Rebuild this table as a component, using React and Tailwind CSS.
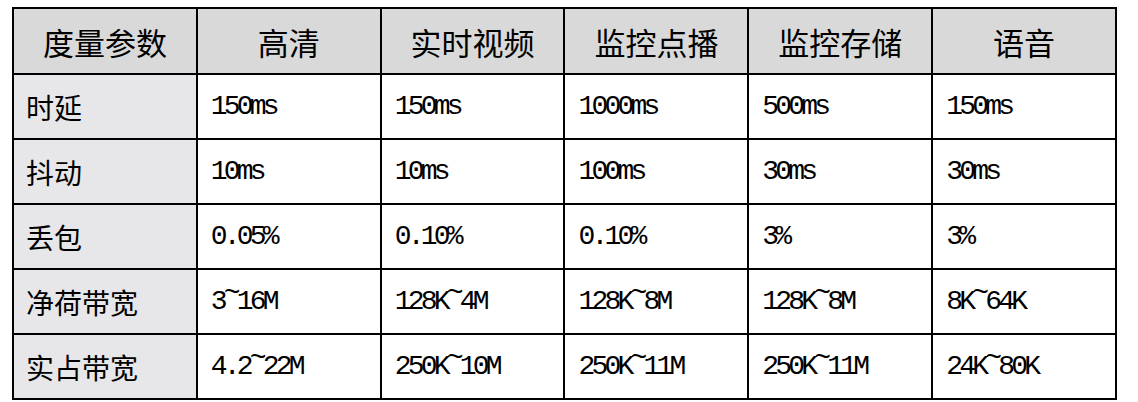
const headers = ['度量参数', '高清', '实时视频', '监控点播', '监控存储', '语音']

const rows = [
  ['时延', '150ms', '150ms', '1000ms', '500ms', '150ms'],
  ['抖动', '10ms', '10ms', '100ms', '30ms', '30ms'],
  ['丢包', '0.05%', '0.10%', '0.10%', '3%', '3%'],
  ['净荷带宽', '3~16M', '128K~4M', '128K~8M', '128K~8M', '8K~64K'],
  ['实占带宽', '4.2~22M', '250K~10M', '250K~11M', '250K~11M', '24K~80K'],
]

const cjk = { fontFamily: '"Noto Sans CJK SC", "Noto Sans", sans-serif' }

// the tilde sits high in the source font, so lift it
function Value({ text }) {
  const parts = text.split('~')
  if (parts.length === 1) return text
  return (
    <>
      {parts[0]}
      <span className="relative -top-[8px]">~</span>
      {parts[1]}
    </>
  )
}

export default function App() {
  return (
    <div className="w-[1138px] h-[402px] bg-white pl-[12px] pt-[7px] overflow-hidden">
      <table className="w-[1105px] table-fixed border-collapse border-2 border-black text-black">
        <thead>
          <tr className="h-[66px]">
            {headers.map(h => (
              <th key={h} className="border-2 border-black bg-[#d9d9d9] text-center font-normal text-[31px] leading-none" style={cjk}>
                {h}
              </th>
            ))}
          </tr>
        </thead>
        <tbody>
          {rows.map(r => (
            <tr key={r[0]} className="h-[65px]">
              <td className="border-2 border-black bg-[#e7e6e8] pl-[12px] text-[28px] leading-none" style={cjk}>
                {r[0]}
              </td>
              {r.slice(1).map((v, i) => (
                <td key={i} className="border-2 border-black bg-white pl-[13px] font-['Liberation_Mono',monospace] text-[28px] tracking-[-3.8px] leading-none">
                  <Value text={v} />
                </td>
              ))}
            </tr>
          ))}
        </tbody>
      </table>
    </div>
  )
}
